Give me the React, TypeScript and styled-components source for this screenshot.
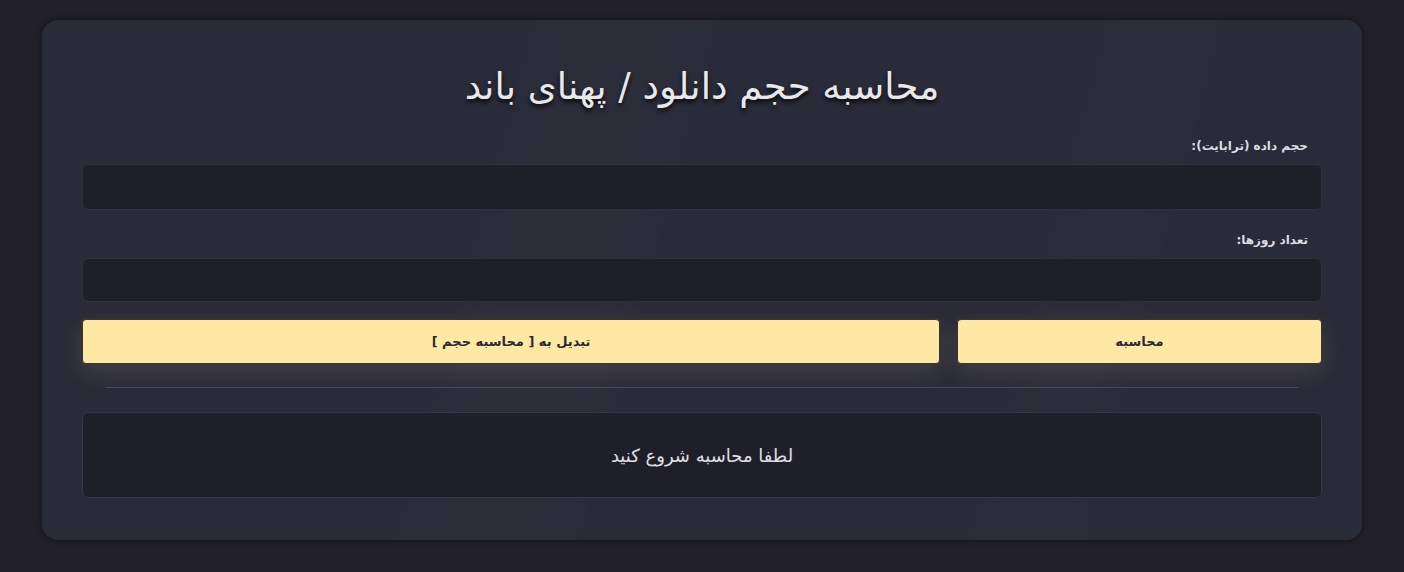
import styled, { createGlobalStyle } from "styled-components";

const GlobalStyle = createGlobalStyle`
  html, body {
    margin: 0;
    padding: 0;
    background: #201f2a;
  }
  body {
    font-family: "DejaVu Sans", "Noto Sans", sans-serif;
  }
`

const Page = styled.div`
  min-height: 572px;
  padding: 20px 42px 32px;
  box-sizing: border-box;
  background: #201f2a;
`

// faint diagonal bands in the card background
const Card = styled.div`
  direction: rtl;
  background:
    linear-gradient(105deg, transparent 33%, rgba(255, 255, 255, 0.01) 36%, rgba(255, 255, 255, 0.01) 44%, transparent 47%),
    linear-gradient(105deg, transparent 72%, rgba(255, 255, 255, 0.009) 75%, rgba(255, 255, 255, 0.009) 79%, transparent 82%),
    #2a2b38;
  border-radius: 16px;
  padding: 45px 40px 42px;
  display: flex;
  flex-direction: column;
  box-shadow: 0 0 6px rgba(0, 0, 0, 0.35);
`

const Title = styled.h1`
  margin: 0 0 30px;
  text-align: center;
  font-size: 37px;
  font-weight: 500;
  line-height: 44px;
  color: #e8e8ec;
  text-shadow: 0 3px 4px rgba(0, 0, 0, 0.8);
`

const Field = styled.div`
  display: flex;
  flex-direction: column;
  gap: 10px;

  & + & {
    margin-top: 23px;
  }
`

const Label = styled.label`
  padding-right: 14px;
  font-size: 12px;
  line-height: 15px;
  font-weight: bold;
  color: #dcdce2;
`

const Input = styled.input<{ $h: number }>`
  height: ${(p) => p.$h}px;
  box-sizing: border-box;
  border: 1px solid #30313f;
  border-radius: 6px;
  background: #1f1f2a;
  color: #e8e8ec;
  outline: none;
`

const Buttons = styled.div`
  display: flex;
  gap: 17px;
  margin-top: 17px;
`

const Button = styled.button<{ $w?: number }>`
  flex: ${(p) => (p.$w ? `0 0 ${p.$w}px` : "1")};
  height: 45px;
  border: 1px solid #3a3526;
  border-radius: 4px;
  background: #ffe8a3;
  color: #2a2b38;
  font-family: inherit;
  font-size: 13px;
  font-weight: bold;
  box-shadow: 0 8px 24px rgba(255, 232, 163, 0.12);
`

const Divider = styled.hr`
  margin: 23px 24px 24px;
  border: none;
  border-top: 1px solid #474859;
`

const Result = styled.div`
  height: 86px;
  box-sizing: border-box;
  border: 1px solid #363747;
  border-radius: 6px;
  background: #1f1f2a;
  display: flex;
  align-items: center;
  justify-content: center;
  font-size: 18px;
  color: #e0e0e6;
`

export default function App() {
  return (
    <>
      <GlobalStyle />
      <Page>
        <Card>
          <Title>محاسبه حجم دانلود / پهنای باند</Title>
          <Field>
            <Label>حجم داده (ترابایت):</Label>
            <Input $h={46} />
          </Field>
          <Field>
            <Label>تعداد روزها:</Label>
            <Input $h={44} />
          </Field>
          <Buttons>
            <Button $w={365}>محاسبه</Button>
            <Button>تبدیل به [ محاسبه حجم ]</Button>
          </Buttons>
          <Divider />
          <Result>لطفا محاسبه شروع کنید</Result>
        </Card>
      </Page>
    </>
  );
}
